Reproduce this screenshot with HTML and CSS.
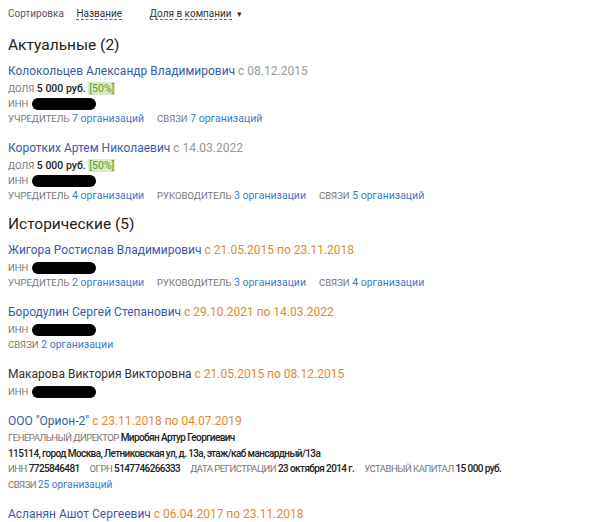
FILE: index.html
```html
<html>
<head>
  <title>Участники</title>
  <link rel="stylesheet" href="styles.css">
</head>
<body>
  <div class="sort">
    <span class="sort-label">Сортировка</span>
    <span class="sort-opt">Название</span>
    <span class="sort-opt">Доля в компании</span><span class="arrow">&#9662;</span>
  </div>

  <h2 class="group">Актуальные (2)</h2>

  <div class="entry">
    <div class="name"><a href="#">Колокольцев Александр Владимирович</a> <span class="since">с 08.12.2015</span></div>
    <div class="row"><span class="lbl">ДОЛЯ</span> <span class="val">5 000 руб.</span> <span class="pct">[50%]</span></div>
    <div class="row"><span class="lbl">ИНН</span> <span class="hidden"></span></div>
    <div class="row"><span class="lbl">УЧРЕДИТЕЛЬ</span> <a href="#" class="cnt">7 организаций</a><span class="lbl gap">СВЯЗИ</span> <a href="#" class="cnt">7 организаций</a></div>
  </div>

  <div class="entry">
    <div class="name"><a href="#">Коротких Артем Николаевич</a> <span class="since">с 14.03.2022</span></div>
    <div class="row"><span class="lbl">ДОЛЯ</span> <span class="val">5 000 руб.</span> <span class="pct">[50%]</span></div>
    <div class="row"><span class="lbl">ИНН</span> <span class="hidden"></span></div>
    <div class="row"><span class="lbl">УЧРЕДИТЕЛЬ</span> <a href="#" class="cnt">4 организации</a><span class="lbl gap">РУКОВОДИТЕЛЬ</span> <a href="#" class="cnt">3 организации</a><span class="lbl gap">СВЯЗИ</span> <a href="#" class="cnt">5 организаций</a></div>
  </div>

  <h2 class="group">Исторические (5)</h2>

  <div class="entry">
    <div class="name"><a href="#">Жигора Ростислав Владимирович</a> <span class="period">с 21.05.2015 по 23.11.2018</span></div>
    <div class="row"><span class="lbl">ИНН</span> <span class="hidden"></span></div>
    <div class="row"><span class="lbl">УЧРЕДИТЕЛЬ</span> <a href="#" class="cnt">2 организации</a><span class="lbl gap">РУКОВОДИТЕЛЬ</span> <a href="#" class="cnt">3 организации</a><span class="lbl gap">СВЯЗИ</span> <a href="#" class="cnt">4 организации</a></div>
  </div>

  <div class="entry">
    <div class="name"><a href="#">Бородулин Сергей Степанович</a> <span class="period">с 29.10.2021 по 14.03.2022</span></div>
    <div class="row"><span class="lbl">ИНН</span> <span class="hidden"></span></div>
    <div class="row"><span class="lbl">СВЯЗИ</span> <a href="#" class="cnt">2 организации</a></div>
  </div>

  <div class="entry">
    <div class="name"><span class="plain">Макарова Виктория Викторовна</span> <span class="period">с 21.05.2015 по 08.12.2015</span></div>
    <div class="row"><span class="lbl">ИНН</span> <span class="hidden"></span></div>
  </div>

  <div class="entry org">
    <div class="name"><a href="#">ООО "Орион-2"</a> <span class="period">с 23.11.2018 по 04.07.2019</span></div>
    <div class="row"><span class="lbl">ГЕНЕРАЛЬНЫЙ ДИРЕКТОР</span> <span class="val">Миробян Артур Георгиевич</span></div>
    <div class="row"><span class="val">115114, город Москва, Летниковская ул, д. 13а, этаж/каб мансардный/13а</span></div>
    <div class="row"><span class="lbl">ИНН</span> <span class="val">7725846481</span><span class="lbl gap">ОГРН</span> <span class="val">5147746266333</span><span class="lbl gap">ДАТА РЕГИСТРАЦИИ</span> <span class="val">23 октября 2014 г.</span><span class="lbl gap">УСТАВНЫЙ КАПИТАЛ</span> <span class="val">15 000 руб.</span></div>
    <div class="row"><span class="lbl">СВЯЗИ</span> <a href="#" class="cnt">25 организаций</a></div>
  </div>

  <div class="entry">
    <div class="name"><a href="#">Асланян Ашот Сергеевич</a> <span class="period">с 06.04.2017 по 23.11.2018</span></div>
  </div>
</body>
</html>
```

FILE: styles.css
```css
body{
    margin:0;
    padding:5px 8px;
    font-family:Roboto, "Noto Sans", sans-serif;
    color:#222;
    background:#fff;
}

a{
    text-decoration:none;
}

.sort{
    font-size:10px;
    color:#555;
    height:18px;
    line-height:18px;
}
.sort-opt{
    color:#333;
    border-bottom:1px dashed #666;
    margin-left:10px;
}
.sort-opt + .sort-opt{
    margin-left:25px;
}
.arrow{
    font-size:9px;
    margin-left:5px;
    color:#333;
}

.group{
    font-size:15.5px;
    font-weight:400;
    margin:11px 0 7px 0;
    line-height:22px;
    color:#222;
}
.entry + .group{
    margin-top:10px;
}

.entry + .entry{
    margin-top:14px;
}

.name{
    font-size:12px;
    line-height:16px;
    margin-bottom:2px;
}
.name a{
    color:#3b5ba5;
}
.name .plain{
    color:#333;
}
.since{
    color:#999;
}
.period{
    color:#dd8a2e;
}

.row{
    font-size:10.5px;
    line-height:15px;
    white-space:nowrap;
}
.lbl{
    font-size:9.5px;
    color:#777;
}
.gap{
    margin-left:13px;
}
.val{
    font-weight:500;
    color:#222;
}
.cnt{
    color:#3f78c8;
}
.pct{
    background:#d8ebc4;
    color:#5c9a30;
    padding:0 1px;
}

.org .name{
    margin-bottom:1px;
}
.org .row{
    font-size:10px;
    line-height:15.5px;
    letter-spacing:-0.6px;
}
.org .lbl{
    font-size:9.5px;
    letter-spacing:-0.5px;
}
.org .gap{
    margin-left:10px;
}
.org .cnt{
    letter-spacing:0;
}

.hidden{
    display:inline-block;
    vertical-align:middle;
    width:64px;
    height:12px;
    margin-left:1px;
    background:#000;
    border-radius:8px;
}
```
